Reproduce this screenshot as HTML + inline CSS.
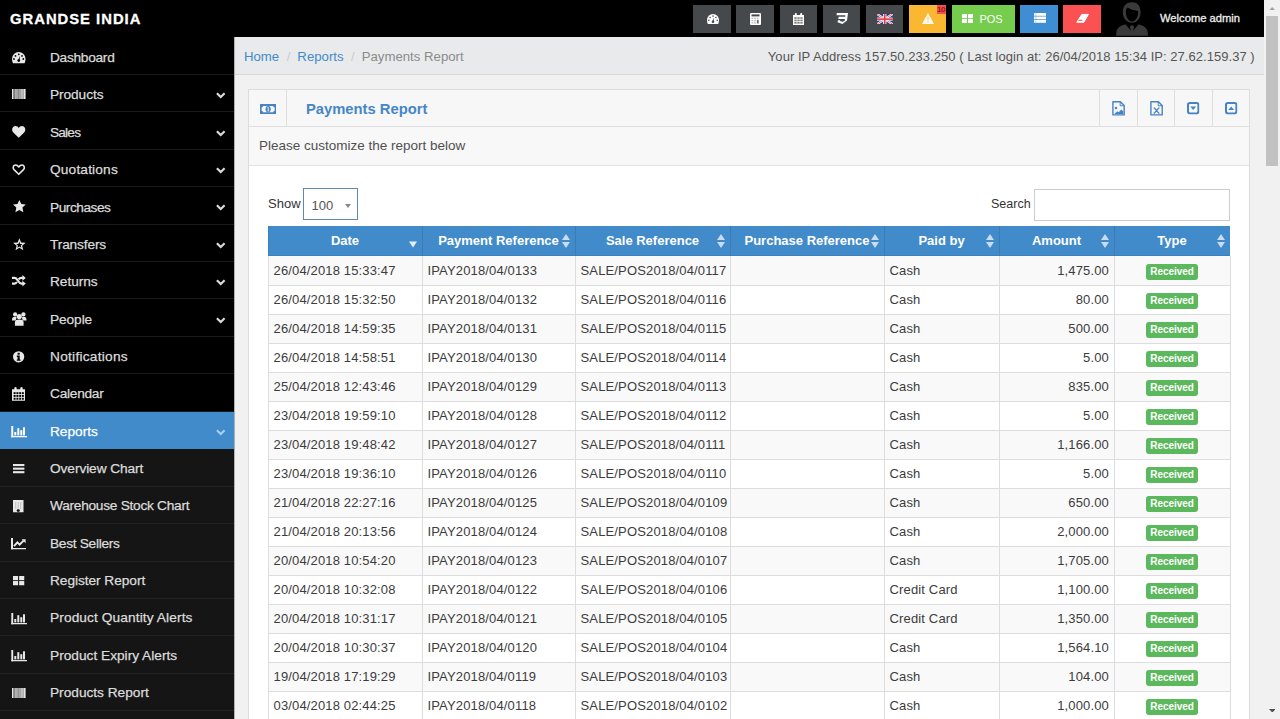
<!DOCTYPE html>
<html><head><meta charset="utf-8">
<style>
*{box-sizing:border-box;margin:0;padding:0}
html,body{width:1280px;height:719px;overflow:hidden;background:#f1f1f1;font-family:"Liberation Sans",sans-serif;font-size:13px;color:#333;position:relative}
svg{display:block}
#hdr{position:absolute;left:0;top:0;width:1264px;height:37px;background:#000}
#logo{position:absolute;left:10px;top:10.9px;color:#fff;font-weight:bold;font-size:14.8px;letter-spacing:1.0px;-webkit-text-stroke:0.3px #fff}
.tb{position:absolute;top:5px;width:38px;height:28px;background:#45494c}
#welcome{position:absolute;left:1160px;top:12.4px;color:#eee;font-size:11.2px;-webkit-text-stroke:0.3px #eee}
.tb svg{position:absolute}
#side{position:absolute;left:0;top:37px;width:234px;height:682px;background:#000}
.mi{position:absolute;left:0;width:234px;height:37.37px;border-bottom:1px solid #1a1a1a;color:#dcdcdc;background:#000}
.mi .t{position:absolute;left:50px;font-size:13.7px;white-space:nowrap;-webkit-text-stroke:0.25px currentColor}
.ic{position:absolute}
.mi .ch{position:absolute;left:215.5px}
.mi.sub{background:#151515;border-bottom:1px solid #222}
.mi.act{background:#428bca;color:#fff;border-bottom:none}
#cont{position:absolute;left:234px;top:37px;width:1030px;height:682px;background:#f1f1f1;border-left:1px solid #b0b0b0}
#bc{position:absolute;left:0;top:0;width:1030px;height:38px;background:#e9eaeb;border-bottom:1px solid #d8d8d8}
#bc .l{position:absolute;left:9px;top:11.6px;color:#8a8a8a;font-size:13.2px}
#bc a{color:#428bca;text-decoration:none}
#bc .sep{color:#ccc;padding:0 7px 0 7.5px}
#bc .r{position:absolute;right:10.3px;top:11.6px;color:#555;letter-spacing:0.04px}
#box{position:absolute;left:13px;top:52px;width:1002px;height:640px;background:#fff;border:1px solid #dcdcdc}
#bxh{position:absolute;left:0;top:0;width:1000px;height:37px;background:#f7f7f7;border-bottom:1px solid #dedede}
#bxi{position:absolute;left:0;top:0;width:38px;height:36px;border-right:1px solid #dedede}
#bxt{position:absolute;left:57px;top:10.8px;color:#4686c6;font-weight:bold;font-size:14.75px}
.hc{position:absolute;top:0;width:38px;height:36px;border-left:1px solid #dedede}
.hc > svg{position:absolute}
#intro{position:absolute;left:0;top:37px;width:1000px;height:39px;background:#f8f8f8;border-bottom:1px solid #e2e2e2}
#intro span{position:absolute;left:10px;top:11px;color:#505050;font-size:13.5px;letter-spacing:0px}
#show{position:absolute;left:268px;top:196px;color:#333}
#sel{position:absolute;left:303px;top:188px;width:55px;height:32px;border:1px solid #6087b0;background:#fff}
#sel span{position:absolute;left:7.5px;top:9px;color:#555}
#sel svg{position:absolute;left:41.2px;top:14.8px}
#srch{position:absolute;left:991px;top:197px;color:#333;font-size:12.5px}
#sbox{position:absolute;left:1034px;top:189px;width:196px;height:32px;border:1px solid #ccc;background:#fff}
#th{position:absolute;background:#428bca;border-bottom:1px solid #3c7fbf;border-left:1px solid #3c7fbf}
.hd{position:absolute;top:226px;height:30px;padding-top:7px;text-align:center;color:#fff;font-weight:bold;font-size:13px}
.hv{position:absolute;top:226px;width:1px;height:30px;background:#3a7cb8}
.sd{position:absolute;top:241px}
.su{position:absolute;top:234px}
.tr{position:absolute;left:268px;width:962px;height:29px;border-top:1px solid #dddddd}
.td{position:absolute;height:29px;padding:7.3px 5px 0 5.5px;color:#3c3c3c;white-space:nowrap;letter-spacing:0.15px}
.vl{position:absolute;top:256px;width:1px;height:470px;background:#dddddd}
.bd{position:absolute;left:1146px;width:52px;height:16px;background:#5cb85c;border-radius:3px;color:#fff;font-weight:bold;font-size:10px;text-align:center;padding-top:2.2px;letter-spacing:-0.05px}
#scroll{position:absolute;left:1264px;top:0;width:16px;height:719px;background:#f1f1f1}
#thumb{position:absolute;left:2px;top:16px;width:12px;height:150px;background:#c1c1c1}
</style></head><body>
<div id="hdr">
  <div id="logo">GRANDSE INDIA</div>
  <div class="tb" style="left:693px;width:38px"><svg style="left:13.5px;top:9px" width="12" height="10" viewBox="0 0 12 10"><path d="M0.9 10 C0.3 9 0 7.5 0 6 A6 6 0 0 1 12 6 C12 7.5 11.7 9 11.1 10 Z" fill="#fff"/><g fill="#45494c"><circle cx="3.1" cy="3.5" r="0.8"/><circle cx="6" cy="2.1" r="0.8"/><circle cx="8.9" cy="3.5" r="0.8"/><circle cx="1.8" cy="6.3" r="0.8"/><circle cx="10.2" cy="6.3" r="0.8"/><circle cx="6" cy="7.8" r="1.3"/><path d="M5.3 7.6 L7 3.4 L6.8 8 Z"/></g></svg></div>
  <div class="tb" style="left:736px;width:38px"><svg style="left:14px;top:7.5px" width="11" height="12" viewBox="0 0 11 12"><rect x="0" y="0" width="11" height="12" rx="1" fill="#fff"/><rect x="1.5" y="1.4" width="8" height="2" fill="#45494c"/><g fill="#b8b9ba"><rect x="1.5" y="4.6" width="1.8" height="1.3"/><rect x="4.1" y="4.6" width="1.8" height="1.3"/><rect x="1.5" y="6.9" width="1.8" height="1.3"/><rect x="4.1" y="6.9" width="1.8" height="1.3"/><rect x="1.5" y="9.2" width="1.8" height="1.3"/><rect x="4.1" y="9.2" width="1.8" height="1.3"/><rect x="6.7" y="4.6" width="1.8" height="1.3"/></g><rect x="6.9" y="6.9" width="1.8" height="3.6" fill="#6a6c6e"/></svg></div>
  <div class="tb" style="left:780px;width:37px"><svg style="left:13px;top:7.5px" width="11" height="12" viewBox="0 0 11 12"><path d="M0 2 H1.8 V1 A1 1 0 0 1 3.8 1 V2 H7.2 V1 A1 1 0 0 1 9.2 1 V2 H11 V12 H0 Z" fill="#fff"/><g fill="#8a8080"><rect x="1.3" y="4.2" width="2.4" height="1.7"/><rect x="4.3" y="4.2" width="2.4" height="1.7" fill="#7f8a80"/><rect x="7.3" y="4.2" width="2.4" height="1.7" fill="#888"/><rect x="1.3" y="6.6" width="2.4" height="1.7"/><rect x="4.3" y="6.6" width="2.4" height="1.7" fill="#7f8a80"/><rect x="7.3" y="6.6" width="2.4" height="1.7" fill="#888"/><rect x="1.3" y="9" width="2.4" height="1.7"/><rect x="4.3" y="9" width="2.4" height="1.7" fill="#7f8a80"/><rect x="7.3" y="9" width="2.4" height="1.7" fill="#888"/></g></svg></div>
  <div class="tb" style="left:823px;width:37px"><svg style="left:12.5px;top:8px" width="12" height="11" viewBox="0 0 12 11"><path d="M0.8 0 H12 L11 7.6 L6.4 11 L1.6 9.3 L1.9 7.2 H4.3 L4.1 8.1 L6.2 8.8 L8.6 7.9 L8.9 5.9 H2.3 L2.7 3.7 H9.2 L9.4 2.3 H0.5 Z" fill="#fff"/></svg></div>
  <div class="tb" style="left:866px;width:37px"><svg style="left:11px;top:9px" width="15.5" height="10.2" viewBox="0 0 15.5 10.2"><rect width="15.5" height="10.2" fill="#2b3f8c"/><path d="M0 0 L15.5 10.2 M15.5 0 L0 10.2" stroke="#fff" stroke-width="2.2"/><path d="M0 0 L15.5 10.2 M15.5 0 L0 10.2" stroke="#e0495a" stroke-width="0.8"/><rect x="6.1" y="0" width="3.3" height="10.2" fill="#fff"/><rect x="0" y="3.6" width="15.5" height="3" fill="#fff"/><rect x="6.9" y="0" width="1.7" height="10.2" fill="#e23a4a"/><rect x="0" y="4.3" width="15.5" height="1.6" fill="#e23a4a"/></svg></div>
  <div class="tb" style="left:909px;width:37px;background:#f9b732"><svg style="left:12.5px;top:7.5px" width="12" height="11" viewBox="0 0 12 11"><path d="M6 0 L12 11 H0 Z" fill="#fffbe8"/><rect x="5.4" y="3.6" width="1.2" height="3.8" fill="#d9c9a0"/><rect x="5.4" y="8.2" width="1.2" height="1.2" fill="#d9c9a0"/></svg><div style="position:absolute;left:28px;top:0;width:9px;height:9px;background:#f05050;color:#a01818;font-size:8px;line-height:9px;font-weight:bold;letter-spacing:-0.5px;overflow:hidden">10</div></div>
  <div class="tb" style="left:952px;width:63px;background:#75cc4d"><svg style="left:9.7px;top:8.6px" width="11" height="9.2" viewBox="0 0 11 9.2"><g fill="#fff"><rect x="0" y="0" width="5" height="4.2"/><rect x="6" y="0" width="5" height="4.2"/><rect x="0" y="5" width="5" height="4.2"/><rect x="6" y="5" width="5" height="4.2"/></g></svg><div style="position:absolute;left:27.5px;top:8px;color:#fff;font-size:11px;letter-spacing:-0.1px">POS</div></div>
  <div class="tb" style="left:1020px;width:38px;background:#3f8dd3"><svg style="left:13.5px;top:8px" width="12.3" height="9.8" viewBox="0 0 12.3 9.8"><g fill="#fff"><rect x="0" y="0" width="12.3" height="2.8"/><rect x="0" y="3.5" width="12.3" height="2.8"/><rect x="0" y="7" width="12.3" height="2.8"/></g><g fill="#3f8dd3" opacity="0.6"><rect x="1.6" y="0" width="0.6" height="9.8"/></g></svg></div>
  <div class="tb" style="left:1063px;width:38px;background:#fa5252"><svg style="left:0;top:0" width="38" height="28" viewBox="0 0 38 28"><path d="M18.8 9.4 L25.4 9.4 L20.8 17.3 L13.8 17.3 Z" fill="#fff" stroke="#fff" stroke-width="1" stroke-linejoin="round"/><path d="M15.4 15.3 L19.2 15.3" stroke="#e85a5a" stroke-width="1.1"/></svg></div>
  <svg style="position:absolute;left:1116px;top:2px" width="32" height="34" viewBox="0 0 32 34"><path d="M16 0.2 C11 0.2 6.8 3.4 6.8 10.2 C6.8 15.8 10.6 20.8 16 20.8 C21.4 20.8 24.6 15.8 24.6 10.2 C24.6 3.4 21 0.2 16 0.2 Z M9.9 9.4 C9.9 7.6 10.6 6 11.8 5.6 C14 7.4 18 8.5 21.9 8.9 C22.1 9.5 22.1 10 22.1 10.6 C22.1 15 19.4 19.6 16 19.6 C12.6 19.6 9.9 15 9.9 10.6 Z" fill="#3a3a3a" fill-rule="evenodd"/><path d="M0.2 33.8 C0.2 27 1.6 24.6 9.4 22.2 L16 30 L22.6 22.2 C30.4 24.6 32 27 32 33.8 Z" fill="#3a3a3a"/><path d="M14.6 23.6 H17.4 L18 25 L17 29.6 L16 30.8 L15 29.6 L14 25 Z" fill="#3a3a3a"/></svg>
  <div id="welcome">Welcome admin</div>
</div>
<div id="side">
</div>
<div class="mi" style="top:37.72px;height:37.38px"><div class="t" style="top:12.30px;letter-spacing:-0.277px">Dashboard</div></div>
<div class="ic" style="left:12.00px;top:51.75px"><svg width="13.5" height="11.25" viewBox="0 0 13.5 11.25" style="overflow:visible"><path d="M1 11.25 C0.3 10 0 8.4 0 6.75 A6.75 6.75 0 0 1 13.5 6.75 C13.5 8.4 13.2 10 12.5 11.25 Z" fill="#e8e8e8"/><g fill="#000"><circle cx="3.5" cy="3.9" r="0.9"/><circle cx="6.75" cy="2.3" r="0.9"/><circle cx="10" cy="3.9" r="0.9"/><circle cx="2" cy="7" r="0.9"/><circle cx="11.3" cy="7" r="0.9"/><circle cx="6.75" cy="8.6" r="1.4"/><path d="M6 8.4 L7.9 3.8 L7.6 8.9 Z"/></g></svg></div>
<div class="mi" style="top:75.10px;height:37.38px"><div class="t" style="top:12.30px;letter-spacing:-0.074px">Products</div><div class="ch" style="top:17.20px"><svg width="10" height="7" viewBox="0 0 10 7" style="overflow:visible"><path d="M0.9 1.2 L4.75 5.1 L8.6 1.2" fill="none" stroke="#dcdcdc" stroke-width="2.1"/></svg></div></div>
<div class="ic" style="left:12.00px;top:88.90px"><svg width="13.6" height="10" viewBox="0 0 13.6 10" style="overflow:visible"><g fill="#e8e8e8"><rect x="0" y="0" width="1.4" height="10"/><rect x="1.4" y="0" width="1.2" height="10" opacity="0.55"/><rect x="2.6" y="0" width="1.8" height="10" opacity="0.75"/><rect x="4.4" y="0" width="1.2" height="10"/><rect x="5.6" y="0" width="1.4" height="10" opacity="0.6"/><rect x="7" y="0" width="2" height="10" opacity="0.7"/><rect x="9" y="0" width="2.4" height="10" opacity="0.8"/><rect x="11.4" y="0" width="2.2" height="10"/></g></svg></div>
<div class="mi" style="top:112.48px;height:37.38px"><div class="t" style="top:12.30px;letter-spacing:-0.812px">Sales</div><div class="ch" style="top:17.20px"><svg width="10" height="7" viewBox="0 0 10 7" style="overflow:visible"><path d="M0.9 1.2 L4.75 5.1 L8.6 1.2" fill="none" stroke="#dcdcdc" stroke-width="2.1"/></svg></div></div>
<div class="ic" style="left:12.00px;top:125.75px"><svg width="13.5" height="11.75" viewBox="0 0 13.5 11.75" style="overflow:visible"><path d="M6.75 11.75 L1.3 6.4 C-0.9 4.1 0.3 0 3.5 0 C5.1 0 6.1 0.9 6.75 1.9 C7.4 0.9 8.4 0 10 0 C13.2 0 14.4 4.1 12.2 6.4 Z" fill="#e8e8e8"/></svg></div>
<div class="mi" style="top:149.86px;height:37.38px"><div class="t" style="top:12.30px;letter-spacing:0.172px">Quotations</div><div class="ch" style="top:17.20px"><svg width="10" height="7" viewBox="0 0 10 7" style="overflow:visible"><path d="M0.9 1.2 L4.75 5.1 L8.6 1.2" fill="none" stroke="#dcdcdc" stroke-width="2.1"/></svg></div></div>
<div class="ic" style="left:12.00px;top:163.75px"><svg width="13.5" height="11.25" viewBox="0 0 13.5 11.25" style="overflow:visible"><path d="M6.75 10.3 L2 5.6 C0.5 4 1.1 1 3.5 1 C4.9 1 5.9 1.8 6.75 3 C7.6 1.8 8.6 1 10 1 C12.4 1 13 4 11.5 5.6 Z" fill="none" stroke="#e8e8e8" stroke-width="1.6" stroke-linejoin="round"/></svg></div>
<div class="mi" style="top:187.24px;height:37.38px"><div class="t" style="top:12.30px;letter-spacing:-0.471px">Purchases</div><div class="ch" style="top:17.20px"><svg width="10" height="7" viewBox="0 0 10 7" style="overflow:visible"><path d="M0.9 1.2 L4.75 5.1 L8.6 1.2" fill="none" stroke="#dcdcdc" stroke-width="2.1"/></svg></div></div>
<div class="ic" style="left:12.50px;top:200.00px"><svg width="12.75" height="12.25" viewBox="0 0 12.75 12.25" style="overflow:visible"><path d="M6.375 0 L8.3 4.1 L12.75 4.6 L9.45 7.6 L10.35 12.25 L6.375 9.95 L2.4 12.25 L3.3 7.6 L0 4.6 L4.45 4.1 Z" fill="#e8e8e8"/></svg></div>
<div class="mi" style="top:224.62px;height:37.38px"><div class="t" style="top:12.30px;letter-spacing:-0.137px">Transfers</div><div class="ch" style="top:17.20px"><svg width="10" height="7" viewBox="0 0 10 7" style="overflow:visible"><path d="M0.9 1.2 L4.75 5.1 L8.6 1.2" fill="none" stroke="#dcdcdc" stroke-width="2.1"/></svg></div></div>
<div class="ic" style="left:12.50px;top:237.75px"><svg width="12.75" height="12.25" viewBox="0 0 12.75 12.25" style="overflow:visible"><path d="M6.38 0.20 L8.08 4.45 L12.65 4.76 L9.13 7.70 L10.25 12.14 L6.38 9.70 L2.50 12.14 L3.62 7.70 L0.10 4.76 L4.67 4.45 Z M5.49 5.89 L3.24 6.08 L4.95 7.56 L4.44 9.77 L6.38 8.60 L8.31 9.77 L7.80 7.56 L9.51 6.08 L7.26 5.89 L6.38 3.80 Z" fill="#e8e8e8" fill-rule="evenodd"/></svg></div>
<div class="mi" style="top:262.00px;height:37.38px"><div class="t" style="top:12.30px;letter-spacing:-0.056px">Returns</div><div class="ch" style="top:17.20px"><svg width="10" height="7" viewBox="0 0 10 7" style="overflow:visible"><path d="M0.9 1.2 L4.75 5.1 L8.6 1.2" fill="none" stroke="#dcdcdc" stroke-width="2.1"/></svg></div></div>
<div class="ic" style="left:11.75px;top:275.25px"><svg width="13.75" height="11.5" viewBox="0 0 13.75 11.5" style="overflow:visible"><g fill="none" stroke="#e8e8e8" stroke-width="2.2"><path d="M0 2.9 H2.6 C5.8 2.9 6.2 8.6 9.4 8.6 H11"/><path d="M0 8.6 H2.6 C3.8 8.6 4.5 7.8 5 7"/><path d="M6.6 4.5 C7.1 3.7 7.8 2.9 9.4 2.9 H11"/></g><path d="M10.4 0 L13.75 2.9 L10.4 5.8 Z M10.4 5.7 L13.75 8.6 L10.4 11.5 Z" fill="#e8e8e8"/></svg></div>
<div class="mi" style="top:299.38px;height:37.38px"><div class="t" style="top:12.30px;letter-spacing:-0.085px">People</div><div class="ch" style="top:17.20px"><svg width="10" height="7" viewBox="0 0 10 7" style="overflow:visible"><path d="M0.9 1.2 L4.75 5.1 L8.6 1.2" fill="none" stroke="#dcdcdc" stroke-width="2.1"/></svg></div></div>
<div class="ic" style="left:11.50px;top:312.25px"><svg width="14.5" height="13.75" viewBox="0 0 14.5 13.75" style="overflow:visible"><g fill="#e8e8e8"><circle cx="3.1" cy="2.4" r="2.1"/><circle cx="11.4" cy="2.4" r="2.1"/><path d="M0 7.9 C0 5.8 0.9 4.8 2.8 4.8 C3.6 4.8 4.2 5.1 4.6 5.5 L3.7 8.6 H0 Z"/><path d="M14.5 7.9 C14.5 5.8 13.6 4.8 11.7 4.8 C10.9 4.8 10.3 5.1 9.9 5.5 L10.8 8.6 H14.5 Z"/><circle cx="7.25" cy="4.6" r="2.6"/><path d="M2.9 13.75 V10.6 C2.9 8.2 4.6 7.6 7.25 7.6 C9.9 7.6 11.6 8.2 11.6 10.6 V13.75 Z"/></g></svg></div>
<div class="mi" style="top:336.76px;height:37.38px"><div class="t" style="top:12.30px;letter-spacing:0.261px">Notifications</div></div>
<div class="ic" style="left:13.00px;top:350.75px"><svg width="11.25" height="11.5" viewBox="0 0 11.25 11.5" style="overflow:visible"><circle cx="5.625" cy="5.75" r="5.625" fill="#e8e8e8"/><g fill="#000"><rect x="4.6" y="1.8" width="2.1" height="1.9"/><path d="M3.8 4.6 H6.7 V8.4 H7.5 V9.7 H3.8 V8.4 H4.6 V5.9 H3.8 Z"/></g></svg></div>
<div class="mi" style="top:374.14px;height:37.38px"><div class="t" style="top:12.30px;letter-spacing:-0.250px">Calendar</div></div>
<div class="ic" style="left:12.25px;top:387.25px"><svg width="13" height="13.75" viewBox="0 0 13 13.75" style="overflow:visible"><path d="M0 2.3 H2.3 V1.2 A1.2 1.2 0 0 1 4.7 1.2 V2.3 H8.3 V1.2 A1.2 1.2 0 0 1 10.7 1.2 V2.3 H13 V13.75 H0 Z" fill="#e8e8e8"/><g fill="#000"><rect x="1.6" y="5.2" width="2" height="1.9"/><rect x="4.4" y="5.2" width="2" height="1.9"/><rect x="7.2" y="5.2" width="2" height="1.9"/><rect x="10" y="5.2" width="1.8" height="1.9"/><rect x="1.6" y="8" width="2" height="1.9"/><rect x="4.4" y="8" width="2" height="1.9"/><rect x="7.2" y="8" width="2" height="1.9"/><rect x="10" y="8" width="1.8" height="1.9"/><rect x="1.6" y="10.8" width="2" height="1.9"/><rect x="4.4" y="10.8" width="2" height="1.9"/><rect x="7.2" y="10.8" width="2" height="1.9"/><rect x="10" y="10.8" width="1.8" height="1.9"/></g></svg></div>
<div class="mi act" style="top:411.60px;height:37.80px"><div class="t" style="top:12.30px;letter-spacing:-0.023px">Reports</div><div class="ch" style="top:17.40px"><svg width="10" height="7" viewBox="0 0 10 7" style="overflow:visible"><path d="M0.9 1.2 L4.75 5.1 L8.6 1.2" fill="none" stroke="#a9cdee" stroke-width="2.1"/></svg></div></div>
<div class="ic" style="left:10.75px;top:425.75px"><svg width="16" height="11.25" viewBox="0 0 16 11.25" style="overflow:visible"><g fill="#fff"><rect x="0.3" y="0" width="1.9" height="11.25"/><rect x="0.3" y="10" width="15.7" height="1.25"/><rect x="3.3" y="6" width="2" height="3.4"/><rect x="6.3" y="2.2" width="2" height="7.2"/><rect x="9.3" y="4.2" width="2" height="5.2"/><rect x="12" y="1.3" width="2" height="8.1"/></g></svg></div>
<div class="mi sub" style="top:449.48px;height:37.38px"><div class="t" style="top:11.40px;letter-spacing:-0.071px">Overview Chart</div></div>
<div class="ic" style="left:13.00px;top:463.75px"><svg width="11.4" height="9.25" viewBox="0 0 11.4 9.25" style="overflow:visible"><g fill="#e8e8e8"><rect x="0" y="0" width="11.4" height="2.1"/><rect x="0" y="3.6" width="11.4" height="2.1"/><rect x="0" y="7.15" width="11.4" height="2.1"/></g></svg></div>
<div class="mi sub" style="top:486.86px;height:37.38px"><div class="t" style="top:11.40px;letter-spacing:-0.265px">Warehouse Stock Chart</div></div>
<div class="ic" style="left:13.00px;top:499.75px"><svg width="10.5" height="12.25" viewBox="0 0 10.5 12.25" style="overflow:visible"><rect x="0" y="0" width="10.5" height="12.25" fill="#e8e8e8"/><g fill="#999" opacity="0.5"><rect x="2.2" y="2" width="1" height="7"/><rect x="4.7" y="2" width="1" height="7"/><rect x="7.2" y="2" width="1" height="7"/></g><ellipse cx="5.25" cy="10.6" rx="1.6" ry="1.3" fill="#111"/></svg></div>
<div class="mi sub" style="top:524.24px;height:37.38px"><div class="t" style="top:11.40px;letter-spacing:-0.285px">Best Sellers</div></div>
<div class="ic" style="left:11.00px;top:537.75px"><svg width="15" height="11.25" viewBox="0 0 15 11.25" style="overflow:visible"><g fill="#e8e8e8"><rect x="0" y="0" width="2" height="11.25"/><rect x="0" y="10" width="15" height="1.25"/></g><path d="M3 8.2 L6.4 4.4 L8.6 6.6 L12.6 2.6" fill="none" stroke="#e8e8e8" stroke-width="2"/><path d="M10.6 1.2 L14.6 1.2 L14.6 5.2 Z" fill="#e8e8e8"/></svg></div>
<div class="mi sub" style="top:561.62px;height:37.38px"><div class="t" style="top:11.40px;letter-spacing:-0.047px">Register Report</div></div>
<div class="ic" style="left:13.00px;top:575.75px"><svg width="11.25" height="9.25" viewBox="0 0 11.25 9.25" style="overflow:visible"><g fill="#e8e8e8"><rect x="0" y="0" width="5.1" height="4.2"/><rect x="6.15" y="0" width="5.1" height="4.2"/><rect x="0" y="5.05" width="5.1" height="4.2"/><rect x="6.15" y="5.05" width="5.1" height="4.2"/></g></svg></div>
<div class="mi sub" style="top:599.00px;height:37.38px"><div class="t" style="top:11.40px;letter-spacing:0.110px">Product Quantity Alerts</div></div>
<div class="ic" style="left:10.75px;top:612.50px"><svg width="16" height="11.25" viewBox="0 0 16 11.25" style="overflow:visible"><g fill="#e8e8e8"><rect x="0.3" y="0" width="1.9" height="11.25"/><rect x="0.3" y="10" width="15.7" height="1.25"/><rect x="3.3" y="6" width="2" height="3.4"/><rect x="6.3" y="2.2" width="2" height="7.2"/><rect x="9.3" y="4.2" width="2" height="5.2"/><rect x="12" y="1.3" width="2" height="8.1"/></g></svg></div>
<div class="mi sub" style="top:636.38px;height:37.38px"><div class="t" style="top:11.40px;letter-spacing:0.003px">Product Expiry Alerts</div></div>
<div class="ic" style="left:10.75px;top:650.00px"><svg width="16" height="11.25" viewBox="0 0 16 11.25" style="overflow:visible"><g fill="#e8e8e8"><rect x="0.3" y="0" width="1.9" height="11.25"/><rect x="0.3" y="10" width="15.7" height="1.25"/><rect x="3.3" y="6" width="2" height="3.4"/><rect x="6.3" y="2.2" width="2" height="7.2"/><rect x="9.3" y="4.2" width="2" height="5.2"/><rect x="12" y="1.3" width="2" height="8.1"/></g></svg></div>
<div class="mi sub" style="top:673.76px;height:37.38px"><div class="t" style="top:11.40px;letter-spacing:-0.008px">Products Report</div></div>
<div class="ic" style="left:11.75px;top:687.75px"><svg width="13.6" height="10" viewBox="0 0 13.6 10" style="overflow:visible"><g fill="#e8e8e8"><rect x="0" y="0" width="1.4" height="10"/><rect x="1.4" y="0" width="1.2" height="10" opacity="0.55"/><rect x="2.6" y="0" width="1.8" height="10" opacity="0.75"/><rect x="4.4" y="0" width="1.2" height="10"/><rect x="5.6" y="0" width="1.4" height="10" opacity="0.6"/><rect x="7" y="0" width="2" height="10" opacity="0.7"/><rect x="9" y="0" width="2.4" height="10" opacity="0.8"/><rect x="11.4" y="0" width="2.2" height="10"/></g></svg></div>
<div class="mi sub" style="top:711.14px;height:37.38px"></div>
<div id="cont">
  <div id="bc">
    <div class="l"><a>Home</a><span class="sep">/</span><a>Reports</a><span class="sep">/</span>Payments Report</div>
    <div class="r">Your IP Address 157.50.233.250 ( Last login at: 26/04/2018 15:34 IP: 27.62.159.37 )</div>
  </div>
  <div id="box">
    <div id="bxh">
      <div id="bxi"><svg style="position:absolute;left:10.5px;top:13.5px" width="16.3" height="10.3" viewBox="0 0 16.3 10.3"><path d="M0 0 H16.3 V10.3 H0 Z M3.2 2 A2 2 0 0 1 1.6 3.6 V6.7 A2 2 0 0 1 3.2 8.3 H13.1 A2 2 0 0 1 14.7 6.7 V3.6 A2 2 0 0 1 13.1 2 Z" fill="#4783c3" fill-rule="evenodd"/><ellipse cx="8.15" cy="5.15" rx="2.6" ry="3.1" fill="#4783c3"/><path d="M7.4 3.3 H8.7 V6.6 H9.3 V7.3 H7.2 V6.6 H7.8 V4.3 L7.2 4.5 Z" fill="#e8f0f8"/></svg></div>
      <div id="bxt">Payments Report</div>
      <div class="hc" style="left:850px"><svg style="left:11.7px;top:11.3px" width="13" height="14.7" viewBox="0 0 13 14.7"><path d="M0.9 0.8 H8.4 L12.2 4.6 V13.9 H0.9 Z" fill="none" stroke="#4783c3" stroke-width="1.4" stroke-linejoin="round"/><path d="M8.2 0.9 V4.8 H12.1" fill="none" stroke="#4783c3" stroke-width="1"/><circle cx="4" cy="7.1" r="1.25" fill="#4783c3"/><path d="M2.4 13 L5.2 10.2 L6.7 11.3 L9.3 8.4 L11.3 10.6 V13 Z" fill="#4783c3"/></svg></div>
      <div class="hc" style="left:888px"><svg style="left:11.6px;top:11.3px" width="13" height="14.7" viewBox="0 0 13 14.7"><path d="M0.9 0.8 H8.4 L12.2 4.6 V13.9 H0.9 Z" fill="none" stroke="#4783c3" stroke-width="1.4" stroke-linejoin="round"/><path d="M8.2 0.9 V4.8 H12.1" fill="none" stroke="#4783c3" stroke-width="1"/><path d="M3.6 7 H5.1 M8 7 H9.5 M3.6 12.2 H5.1 M8 12.2 H9.5 M4.4 7 L8.7 12.2 M8.7 7 L4.4 12.2" fill="none" stroke="#4783c3" stroke-width="1.2"/></svg></div>
      <div class="hc" style="left:925px"><svg style="left:12.4px;top:12.4px" width="12.4" height="12.4"><svg width="12.4" height="12.4" viewBox="0 0 12.4 12.4"><rect x="1" y="1" width="10.4" height="10.4" rx="1.8" fill="none" stroke="#4783c3" stroke-width="2"/><path d="M3.3 4.4 H9.1 L6.2 7.9 Z" fill="#4783c3"/></svg></svg></div>
      <div class="hc" style="left:963px"><svg style="left:12.3px;top:12.4px" width="12.4" height="12.4"><svg width="12.4" height="12.4" viewBox="0 0 12.4 12.4"><rect x="1" y="1" width="10.4" height="10.4" rx="1.8" fill="none" stroke="#4783c3" stroke-width="2"/><path d="M3.3 7.9 H9.1 L6.2 4.4 Z" fill="#4783c3"/></svg></svg></div>
    </div>
    <div id="intro"><span>Please customize the report below</span></div>
  </div>
</div>
<div id="show">Show</div>
<div id="sel"><span>100</span><svg width="6" height="4" viewBox="0 0 6 4"><path d="M0 0 H6 L3 4 Z" fill="#888"/></svg></div>
<div id="srch">Search</div>
<div id="sbox"></div>
<div id="th" style="left:268px;top:226px;width:962px;height:30px"></div>
<div class="hd" style="left:268px;width:154px">Date</div>
<div class="sd" style="left:409px"><svg width="8" height="7" viewBox="0 0 8 7"><path d="M0 0.5 H8 L4 6.5 Z" fill="#e6eef7"/></svg></div>
<div class="hd" style="left:422px;width:153px">Payment Reference</div>
<div class="su" style="left:562px"><svg width="8" height="14" viewBox="0 0 8 14"><path d="M0 6 L4 0 L8 6 Z M0 8 H8 L4 14 Z" fill="#c9dcef"/></svg></div>
<div class="hv" style="left:422px"></div>
<div class="hd" style="left:575px;width:155px">Sale Reference</div>
<div class="su" style="left:717px"><svg width="8" height="14" viewBox="0 0 8 14"><path d="M0 6 L4 0 L8 6 Z M0 8 H8 L4 14 Z" fill="#c9dcef"/></svg></div>
<div class="hv" style="left:575px"></div>
<div class="hd" style="left:730px;width:154px">Purchase Reference</div>
<div class="su" style="left:871px"><svg width="8" height="14" viewBox="0 0 8 14"><path d="M0 6 L4 0 L8 6 Z M0 8 H8 L4 14 Z" fill="#c9dcef"/></svg></div>
<div class="hv" style="left:730px"></div>
<div class="hd" style="left:884px;width:115px">Paid by</div>
<div class="su" style="left:986px"><svg width="8" height="14" viewBox="0 0 8 14"><path d="M0 6 L4 0 L8 6 Z M0 8 H8 L4 14 Z" fill="#c9dcef"/></svg></div>
<div class="hv" style="left:884px"></div>
<div class="hd" style="left:999px;width:115px">Amount</div>
<div class="su" style="left:1101px"><svg width="8" height="14" viewBox="0 0 8 14"><path d="M0 6 L4 0 L8 6 Z M0 8 H8 L4 14 Z" fill="#c9dcef"/></svg></div>
<div class="hv" style="left:999px"></div>
<div class="hd" style="left:1114px;width:116px">Type</div>
<div class="su" style="left:1217px"><svg width="8" height="14" viewBox="0 0 8 14"><path d="M0 6 L4 0 L8 6 Z M0 8 H8 L4 14 Z" fill="#c9dcef"/></svg></div>
<div class="hv" style="left:1114px"></div>
<div class="tr" style="top:256px;background:#f9f9f9;border-top-color:transparent"></div>
<div class="td" style="left:268px;width:154px;top:256px">26/04/2018 15:33:47</div>
<div class="td" style="left:422px;width:153px;top:256px">IPAY2018/04/0133</div>
<div class="td" style="left:575px;width:155px;top:256px">SALE/POS2018/04/0117</div>
<div class="td" style="left:884px;width:115px;top:256px">Cash</div>
<div class="td" style="left:999px;width:115px;top:256px;text-align:right">1,475.00</div>
<div class="bd" style="top:264px">Received</div>
<div class="tr" style="top:285px;background:#fff;"></div>
<div class="td" style="left:268px;width:154px;top:285px">26/04/2018 15:32:50</div>
<div class="td" style="left:422px;width:153px;top:285px">IPAY2018/04/0132</div>
<div class="td" style="left:575px;width:155px;top:285px">SALE/POS2018/04/0116</div>
<div class="td" style="left:884px;width:115px;top:285px">Cash</div>
<div class="td" style="left:999px;width:115px;top:285px;text-align:right">80.00</div>
<div class="bd" style="top:293px">Received</div>
<div class="tr" style="top:314px;background:#f9f9f9;"></div>
<div class="td" style="left:268px;width:154px;top:314px">26/04/2018 14:59:35</div>
<div class="td" style="left:422px;width:153px;top:314px">IPAY2018/04/0131</div>
<div class="td" style="left:575px;width:155px;top:314px">SALE/POS2018/04/0115</div>
<div class="td" style="left:884px;width:115px;top:314px">Cash</div>
<div class="td" style="left:999px;width:115px;top:314px;text-align:right">500.00</div>
<div class="bd" style="top:322px">Received</div>
<div class="tr" style="top:343px;background:#fff;"></div>
<div class="td" style="left:268px;width:154px;top:343px">26/04/2018 14:58:51</div>
<div class="td" style="left:422px;width:153px;top:343px">IPAY2018/04/0130</div>
<div class="td" style="left:575px;width:155px;top:343px">SALE/POS2018/04/0114</div>
<div class="td" style="left:884px;width:115px;top:343px">Cash</div>
<div class="td" style="left:999px;width:115px;top:343px;text-align:right">5.00</div>
<div class="bd" style="top:351px">Received</div>
<div class="tr" style="top:372px;background:#f9f9f9;"></div>
<div class="td" style="left:268px;width:154px;top:372px">25/04/2018 12:43:46</div>
<div class="td" style="left:422px;width:153px;top:372px">IPAY2018/04/0129</div>
<div class="td" style="left:575px;width:155px;top:372px">SALE/POS2018/04/0113</div>
<div class="td" style="left:884px;width:115px;top:372px">Cash</div>
<div class="td" style="left:999px;width:115px;top:372px;text-align:right">835.00</div>
<div class="bd" style="top:380px">Received</div>
<div class="tr" style="top:401px;background:#fff;"></div>
<div class="td" style="left:268px;width:154px;top:401px">23/04/2018 19:59:10</div>
<div class="td" style="left:422px;width:153px;top:401px">IPAY2018/04/0128</div>
<div class="td" style="left:575px;width:155px;top:401px">SALE/POS2018/04/0112</div>
<div class="td" style="left:884px;width:115px;top:401px">Cash</div>
<div class="td" style="left:999px;width:115px;top:401px;text-align:right">5.00</div>
<div class="bd" style="top:409px">Received</div>
<div class="tr" style="top:430px;background:#f9f9f9;"></div>
<div class="td" style="left:268px;width:154px;top:430px">23/04/2018 19:48:42</div>
<div class="td" style="left:422px;width:153px;top:430px">IPAY2018/04/0127</div>
<div class="td" style="left:575px;width:155px;top:430px">SALE/POS2018/04/0111</div>
<div class="td" style="left:884px;width:115px;top:430px">Cash</div>
<div class="td" style="left:999px;width:115px;top:430px;text-align:right">1,166.00</div>
<div class="bd" style="top:438px">Received</div>
<div class="tr" style="top:459px;background:#fff;"></div>
<div class="td" style="left:268px;width:154px;top:459px">23/04/2018 19:36:10</div>
<div class="td" style="left:422px;width:153px;top:459px">IPAY2018/04/0126</div>
<div class="td" style="left:575px;width:155px;top:459px">SALE/POS2018/04/0110</div>
<div class="td" style="left:884px;width:115px;top:459px">Cash</div>
<div class="td" style="left:999px;width:115px;top:459px;text-align:right">5.00</div>
<div class="bd" style="top:467px">Received</div>
<div class="tr" style="top:488px;background:#f9f9f9;"></div>
<div class="td" style="left:268px;width:154px;top:488px">21/04/2018 22:27:16</div>
<div class="td" style="left:422px;width:153px;top:488px">IPAY2018/04/0125</div>
<div class="td" style="left:575px;width:155px;top:488px">SALE/POS2018/04/0109</div>
<div class="td" style="left:884px;width:115px;top:488px">Cash</div>
<div class="td" style="left:999px;width:115px;top:488px;text-align:right">650.00</div>
<div class="bd" style="top:496px">Received</div>
<div class="tr" style="top:517px;background:#fff;"></div>
<div class="td" style="left:268px;width:154px;top:517px">21/04/2018 20:13:56</div>
<div class="td" style="left:422px;width:153px;top:517px">IPAY2018/04/0124</div>
<div class="td" style="left:575px;width:155px;top:517px">SALE/POS2018/04/0108</div>
<div class="td" style="left:884px;width:115px;top:517px">Cash</div>
<div class="td" style="left:999px;width:115px;top:517px;text-align:right">2,000.00</div>
<div class="bd" style="top:525px">Received</div>
<div class="tr" style="top:546px;background:#f9f9f9;"></div>
<div class="td" style="left:268px;width:154px;top:546px">20/04/2018 10:54:20</div>
<div class="td" style="left:422px;width:153px;top:546px">IPAY2018/04/0123</div>
<div class="td" style="left:575px;width:155px;top:546px">SALE/POS2018/04/0107</div>
<div class="td" style="left:884px;width:115px;top:546px">Cash</div>
<div class="td" style="left:999px;width:115px;top:546px;text-align:right">1,705.00</div>
<div class="bd" style="top:554px">Received</div>
<div class="tr" style="top:575px;background:#fff;"></div>
<div class="td" style="left:268px;width:154px;top:575px">20/04/2018 10:32:08</div>
<div class="td" style="left:422px;width:153px;top:575px">IPAY2018/04/0122</div>
<div class="td" style="left:575px;width:155px;top:575px">SALE/POS2018/04/0106</div>
<div class="td" style="left:884px;width:115px;top:575px">Credit Card</div>
<div class="td" style="left:999px;width:115px;top:575px;text-align:right">1,100.00</div>
<div class="bd" style="top:583px">Received</div>
<div class="tr" style="top:604px;background:#f9f9f9;"></div>
<div class="td" style="left:268px;width:154px;top:604px">20/04/2018 10:31:17</div>
<div class="td" style="left:422px;width:153px;top:604px">IPAY2018/04/0121</div>
<div class="td" style="left:575px;width:155px;top:604px">SALE/POS2018/04/0105</div>
<div class="td" style="left:884px;width:115px;top:604px">Credit Card</div>
<div class="td" style="left:999px;width:115px;top:604px;text-align:right">1,350.00</div>
<div class="bd" style="top:612px">Received</div>
<div class="tr" style="top:633px;background:#fff;"></div>
<div class="td" style="left:268px;width:154px;top:633px">20/04/2018 10:30:37</div>
<div class="td" style="left:422px;width:153px;top:633px">IPAY2018/04/0120</div>
<div class="td" style="left:575px;width:155px;top:633px">SALE/POS2018/04/0104</div>
<div class="td" style="left:884px;width:115px;top:633px">Cash</div>
<div class="td" style="left:999px;width:115px;top:633px;text-align:right">1,564.10</div>
<div class="bd" style="top:641px">Received</div>
<div class="tr" style="top:662px;background:#f9f9f9;"></div>
<div class="td" style="left:268px;width:154px;top:662px">19/04/2018 17:19:29</div>
<div class="td" style="left:422px;width:153px;top:662px">IPAY2018/04/0119</div>
<div class="td" style="left:575px;width:155px;top:662px">SALE/POS2018/04/0103</div>
<div class="td" style="left:884px;width:115px;top:662px">Cash</div>
<div class="td" style="left:999px;width:115px;top:662px;text-align:right">104.00</div>
<div class="bd" style="top:670px">Received</div>
<div class="tr" style="top:691px;background:#fff;"></div>
<div class="td" style="left:268px;width:154px;top:691px">03/04/2018 02:44:25</div>
<div class="td" style="left:422px;width:153px;top:691px">IPAY2018/04/0118</div>
<div class="td" style="left:575px;width:155px;top:691px">SALE/POS2018/04/0102</div>
<div class="td" style="left:884px;width:115px;top:691px">Cash</div>
<div class="td" style="left:999px;width:115px;top:691px;text-align:right">1,000.00</div>
<div class="bd" style="top:699px">Received</div>
<div class="vl" style="left:268px"></div>
<div class="vl" style="left:422px"></div>
<div class="vl" style="left:575px"></div>
<div class="vl" style="left:730px"></div>
<div class="vl" style="left:884px"></div>
<div class="vl" style="left:999px"></div>
<div class="vl" style="left:1114px"></div>
<div class="vl" style="left:1230px"></div>
<div id="scroll"><svg style="position:absolute;left:4.8px;top:6.7px" width="6.4" height="3.4" viewBox="0 0 6.4 3.4"><path d="M3.2 0 L6.4 3.4 H0 Z" fill="#a3a3a3"/></svg><div id="thumb"></div><svg style="position:absolute;left:4.9px;top:708.8px" width="6.6" height="3.6" viewBox="0 0 6.6 3.6"><path d="M0 0 H6.6 L3.3 3.6 Z" fill="#505050"/></svg></div>
</body></html>
